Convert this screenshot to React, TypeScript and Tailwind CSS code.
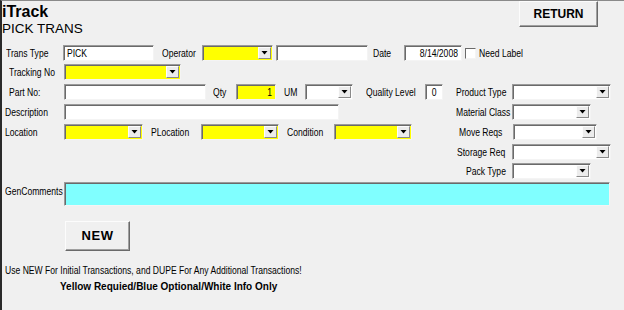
import React from "react";

const WIDE = "font-['Liberation_Sans',Arial,sans-serif]";

function N({ children, origin = "origin-left" }: { children: React.ReactNode; origin?: string }) {
  return <span className={`inline-block ${origin} scale-x-[0.78] whitespace-nowrap`}>{children}</span>;
}

function Label({ w, ml = 0, children, extra = "" }: { w: number; ml?: number; children: React.ReactNode; extra?: string }) {
  return (
    <div
      className={`${WIDE} ${extra} shrink-0 text-[11px] leading-none text-black whitespace-nowrap`}
      style={{ width: w, marginLeft: ml }}
    >
      <N>{children}</N>
    </div>
  );
}

function Field({
  w,
  ml = 0,
  bg = "bg-white",
  h = 16,
  align = "left",
  children,
}: {
  w: number;
  ml?: number;
  bg?: string;
  h?: number;
  align?: "left" | "right" | "center";
  children?: React.ReactNode;
}) {
  const cls = align === "right" ? "justify-end" : align === "center" ? "justify-center" : "justify-start";
  const origin = align === "right" ? "origin-right" : align === "center" ? "origin-center" : "origin-left";
  return (
    <div
      className={`${bg} ${WIDE} ${cls} flex items-center shrink-0 overflow-hidden border border-t-[#9a9a9a] border-l-[#9a9a9a] border-b-[#f4f4f4] border-r-[#f4f4f4] shadow-[inset_1px_1px_0_#6a6a6a] px-[3px] text-[11px] leading-[14px] text-black`}
      style={{ width: w, height: h, marginLeft: ml }}
    >
      {children ? <N origin={origin}>{children}</N> : null}
    </div>
  );
}

function Combo({ w, ml = 0, bg = "bg-white" }: { w: number; ml?: number; bg?: string }) {
  return (
    <div
      className={`${bg} shrink-0 flex justify-end items-stretch border border-t-[#9a9a9a] border-l-[#9a9a9a] border-b-[#f4f4f4] border-r-[#f4f4f4] shadow-[inset_1px_1px_0_#6a6a6a] p-[1px] pl-[2px]`}
      style={{ width: w, height: 16, marginLeft: ml }}
    >
      <div className="w-[13px] bg-[#ececec] border border-t-[#fdfdfd] border-l-[#fdfdfd] border-b-[#8a8a8a] border-r-[#8a8a8a] flex items-center justify-center">
        <svg width="7" height="4" viewBox="0 0 7 4">
          <polygon points="0.5,0 6.5,0 3.5,3.5" fill="#000" />
        </svg>
      </div>
    </div>
  );
}

function Row({ pl, mt, children }: { pl: number; mt: number; children: React.ReactNode }) {
  return (
    <div className="flex items-center h-[16px]" style={{ paddingLeft: pl, marginTop: mt }}>
      {children}
    </div>
  );
}

export default function App() {
  return (
    <div className="w-[624px] h-[310px] bg-[#f0f0f0] border-t border-t-[#8a8a8a] border-l-2 border-l-[#2a2a2a] overflow-hidden flex flex-col">
      <div className="flex justify-between items-start h-[43px]">
        <div className="pt-[2px]">
          <div className={`${WIDE} text-[16px] font-bold leading-[18px] text-black`}>iTrack</div>
          <div className={`${WIDE} text-[13.5px] leading-[16px] text-black`}>PICK TRANS</div>
        </div>
        <div className="mr-[26px] w-[79px] h-[26px] bg-[#f0f0f0] border border-t-[#fcfcfc] border-l-[#fcfcfc] border-b-[#6a6a6a] border-r-[#6a6a6a] shadow-[inset_-1px_-1px_0_#a0a0a0] flex items-center justify-center">
          <span className={`${WIDE} text-[12px] font-bold text-black`}>RETURN</span>
        </div>
      </div>

      <div className="-ml-[2px] flex flex-col">
        <Row pl={6} mt={1}>
          <Label w={57}>Trans Type</Label>
          <Field w={91}>PICK</Field>
          <Label w={40} ml={8}>Operator</Label>
          <Combo w={71} bg="bg-[#ffff00]" />
          <Field w={92} ml={3} />
          <Label w={31} ml={5}>Date</Label>
          <Field w={58} align="right">8/14/2008</Field>
          <div className="ml-[3px] w-[11px] h-[11px] bg-white border border-t-[#6a6a6a] border-l-[#6a6a6a] border-b-[#f4f4f4] border-r-[#f4f4f4] shrink-0" />
          <Label w={60} ml={3}>Need Label</Label>
        </Row>

        <Row pl={9} mt={3}>
          <Label w={55}>Tracking No</Label>
          <Combo w={117} bg="bg-[#ffff00]" />
        </Row>

        <Row pl={9} mt={4}>
          <Label w={55}>Part No:</Label>
          <Field w={142} />
          <Label w={23} ml={7}>Qty</Label>
          <Field w={40} bg="bg-[#ffff00]" align="right">1</Field>
          <Label w={21} ml={8}>UM</Label>
          <Combo w={48} />
          <Label w={59} ml={13}>Quality Level</Label>
          <Field w={18} align="center">0</Field>
          <Label w={56} ml={13}>Product Type</Label>
          <Combo w={99} />
        </Row>

        <Row pl={5} mt={4}>
          <Label w={59}>Description</Label>
          <Field w={275} />
          <Label w={56} ml={117}>Material Class</Label>
          <Combo w={79} />
        </Row>

        <Row pl={5} mt={4}>
          <Label w={59}>Location</Label>
          <Combo w={79} bg="bg-[#ffff00]" />
          <Label w={50} ml={8}>PLocation</Label>
          <Combo w={78} bg="bg-[#ffff00]" />
          <Label w={47} ml={8}>Condition</Label>
          <Combo w={78} bg="bg-[#ffff00]" />
          <Label w={54} ml={47}>Move Reqs</Label>
          <Combo w={84} />
        </Row>

        <Row pl={457} mt={4}>
          <Label w={55}>Storage Req</Label>
          <Combo w={99} />
        </Row>

        <Row pl={466} mt={3}>
          <Label w={46}>Pack Type</Label>
          <Combo w={79} />
        </Row>

        <div className="flex items-start mt-[3px] pl-[5px]">
          <Label w={59} extra="pt-[4px]">GenComments</Label>
          <Field w={546} h={24} bg="bg-[#80ffff]" />
        </div>

        <div className="ml-[65px] mt-[15px] w-[65px] h-[30px] bg-[#f0f0f0] border border-t-[#fcfcfc] border-l-[#fcfcfc] border-b-[#6a6a6a] border-r-[#6a6a6a] shadow-[inset_-1px_-1px_0_#a0a0a0] flex items-center justify-center">
          <span className={`${WIDE} text-[13px] font-bold tracking-[0.5px] text-black`}>NEW</span>
        </div>

        <div className={`${WIDE} ml-[5px] mt-[13px] text-[11px] leading-[12px] text-black whitespace-nowrap`}>
          <N>Use NEW For Initial Transactions, and DUPE For Any Additional Transactions!</N>
        </div>
        <div className={`${WIDE} ml-[60px] mt-[5px] text-[10px] font-bold leading-[12px] text-black whitespace-nowrap`}>
          Yellow Requied/Blue Optional/White Info Only
        </div>
      </div>
    </div>
  );
}
